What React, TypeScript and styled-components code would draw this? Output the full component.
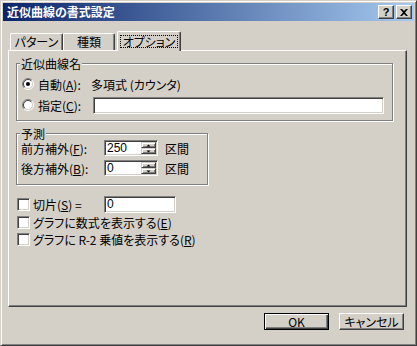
import styled, { createGlobalStyle } from 'styled-components';

const Global = createGlobalStyle`
  html, body {
    margin: 0;
    padding: 0;
    background: #d4d0c8;
  }
  body {
    font-family: "Noto Sans CJK JP", "Noto Sans", sans-serif;
    font-size: 12px;
    font-feature-settings: "palt";
    color: #000;
  }
  * {
    box-sizing: border-box;
  }
`;

const Window = styled.div`
  width: 417px;
  height: 346px;
  background: #d4d0c8;
  border: 1px solid;
  border-color: #d4d0c8 #404040 #404040 #d4d0c8;
  box-shadow: inset 1px 1px #fff, inset -1px -1px #808080;
  padding: 2px;
  display: flex;
  flex-direction: column;
`;

const TitleBar = styled.div`
  height: 18px;
  display: flex;
  align-items: center;
  padding: 0 2px;
  background: linear-gradient(to right, #0a246a, #a6caf0);
`;

const Title = styled.span`
  margin-left: 2px;
  color: #fff;
  font-weight: 700;
  font-size: 12px;
  line-height: 14px;
`;

const CaptionBtns = styled.div`
  margin-left: auto;
  display: flex;
  gap: 2px;
`;

const CaptionBtn = styled.div`
  width: 16px;
  height: 14px;
  display: flex;
  align-items: center;
  justify-content: center;
  background: #d4d0c8;
  border: 1px solid;
  border-color: #fff #404040 #404040 #fff;
  box-shadow: inset -1px -1px #808080;
  font-family: "Liberation Sans", sans-serif;
  font-weight: 700;
  font-size: 11px;
  line-height: 12px;
`;

const Body = styled.div`
  flex: 1;
  display: flex;
  flex-direction: column;
  padding: 10px 7px 0 5px;
`;

const TabRow = styled.div`
  height: 20px;
  display: flex;
  align-items: flex-end;
  padding-left: 2px;
  margin-bottom: -1px;
  position: relative;
  z-index: 1;
`;

const Tab = styled.div<{ $active?: boolean; $w: number; $ml?: number }>`
  width: ${(p) => p.$w}px;
  height: ${(p) => (p.$active ? 20 : 17)}px;
  margin-bottom: ${(p) => (p.$active ? 0 : 1)}px;
  margin-left: ${(p) => p.$ml ?? 0}px;
  display: flex;
  align-items: center;
  justify-content: center;
  padding-bottom: ${(p) => (p.$active ? 1 : 0)}px;
  background: #d4d0c8;
  border-top: 1px solid #fff;
  border-left: 1px solid #fff;
  border-right: 1px solid #404040;
  border-radius: 2px 2px 0 0;
  box-shadow: inset -1px 0 #808080;
  line-height: 14px;
`;

const Focus = styled.span`
  border: 1px dotted #000;
  padding: 0 2px;
  line-height: 11px;
`;

const Panel = styled.div`
  height: 257px;
  display: flex;
  flex-direction: column;
  align-items: flex-start;
  padding: 12px 0 0 7px;
  border: 1px solid;
  border-color: #fff #404040 #404040 #fff;
  box-shadow: inset -1px -1px #808080;
`;

const Group = styled.div<{ $w: number; $h: number; $mt?: number }>`
  position: relative;
  width: ${(p) => p.$w}px;
  height: ${(p) => p.$h}px;
  margin-top: ${(p) => p.$mt ?? 0}px;
  border: 1px solid #808080;
  box-shadow: inset 1px 1px #fff, 1px 1px #fff;
  display: flex;
  flex-direction: column;
`;

const GroupLabel = styled.span`
  position: absolute;
  top: -6px;
  left: 3px;
  padding: 0 1px;
  background: #d4d0c8;
  line-height: 12px;
`;

const RadioList = styled.div`
  display: flex;
  flex-direction: column;
  gap: 1px;
  padding: 10px 0 0 5px;
`;

const Row = styled.div<{ $h: number }>`
  height: ${(p) => p.$h}px;
  display: flex;
  align-items: center;
  line-height: 13px;
  white-space: nowrap;
`;

const Label = styled.span<{ $w: number }>`
  width: ${(p) => p.$w}px;
  flex: none;
`;

const U = styled.span`
  text-decoration: underline;
  text-underline-offset: 1px;
`;

const RadioBox = styled.svg`
  flex: none;
  margin-right: 4px;
`;

const Sunken = styled.div<{ $w: number; $h: number }>`
  width: ${(p) => p.$w}px;
  height: ${(p) => p.$h}px;
  flex: none;
  display: flex;
  background: #fff;
  border: 1px solid;
  border-color: #808080 #fff #fff #808080;
  box-shadow: inset 1px 1px #404040, inset -1px -1px #d4d0c8;
  padding: 1px 1px 1px 2px;
  font-family: "Liberation Sans", sans-serif;
  font-size: 12px;
  line-height: 13px;
`;

const FieldText = styled.span`
  flex: 1;
  align-self: center;
`;

const SpinBtns = styled.div`
  width: 15px;
  display: flex;
  flex-direction: column;
`;

const SpinBtn = styled.div`
  flex: 1;
  display: flex;
  align-items: center;
  justify-content: center;
  background: #d4d0c8;
  border: 1px solid;
  border-color: #d4d0c8 #404040 #404040 #d4d0c8;
  box-shadow: inset 1px 1px #fff, inset -1px -1px #808080;
`;

const SpinList = styled.div`
  display: flex;
  flex-direction: column;
  gap: 4px;
  padding: 6px 0 0 4px;
`;

const Unit = styled.span`
  margin-left: 7px;
`;

const CheckList = styled.div`
  display: flex;
  flex-direction: column;
  margin-top: 9px;
  padding-left: 1px;
`;

const CheckBox = styled.div`
  width: 13px;
  height: 13px;
  flex: none;
  margin-right: 3px;
  background: #fff;
  border: 1px solid;
  border-color: #808080 #fff #fff #808080;
  box-shadow: inset 1px 1px #404040, inset -1px -1px #d4d0c8;
`;

const ButtonRow = styled.div`
  display: flex;
  justify-content: flex-end;
  gap: 10px;
  margin-top: 6px;
  padding-right: 3px;
`;

const Button = styled.div<{ $default?: boolean }>`
  width: 65px;
  height: 17px;
  display: flex;
  align-items: center;
  justify-content: center;
  background: #d4d0c8;
  border: 1px solid;
  border-color: ${(p) => (p.$default ? '#000' : '#fff #404040 #404040 #fff')};
  box-shadow: ${(p) =>
    p.$default
      ? 'inset 1px 1px #fff, inset -1px -1px #404040, inset -2px -2px #808080'
      : 'inset -1px -1px #808080'};
  line-height: 14px;
`;

function Radio({ checked }: { checked?: boolean }) {
  return (
    <RadioBox width="12" height="12" viewBox="0 0 12 12">
      <circle cx="6" cy="6" r="4.5" fill="#fff" />
      <path d="M2.1 9.9 A5.5 5.5 0 0 1 9.9 2.1" fill="none" stroke="#808080" />
      <path d="M9.9 2.1 A5.5 5.5 0 0 1 2.1 9.9" fill="none" stroke="#fff" />
      <path d="M2.8 9.2 A4.5 4.5 0 0 1 9.2 2.8" fill="none" stroke="#404040" />
      <path d="M9.2 2.8 A4.5 4.5 0 0 1 2.8 9.2" fill="none" stroke="#d4d0c8" />
      {checked && <circle cx="6" cy="6" r="2" fill="#000" />}
    </RadioBox>
  );
}

function Arrow({ up }: { up?: boolean }) {
  return (
    <svg width="5" height="3" viewBox="0 0 5 3">
      <path d={up ? 'M2.5 0.5 L4.5 2.5 L0.5 2.5 Z' : 'M0.5 0.5 L4.5 0.5 L2.5 2.5 Z'} fill="#000" />
    </svg>
  );
}

function Spin({ value }: { value: string }) {
  return (
    <Sunken $w={54} $h={16}>
      <FieldText>{value}</FieldText>
      <SpinBtns>
        <SpinBtn>
          <Arrow up />
        </SpinBtn>
        <SpinBtn>
          <Arrow />
        </SpinBtn>
      </SpinBtns>
    </Sunken>
  );
}

export default function App() {
  return (
    <>
      <Global />
      <Window>
        <TitleBar>
          <Title>近似曲線の書式設定</Title>
          <CaptionBtns>
            <CaptionBtn>?</CaptionBtn>
            <CaptionBtn>
              <svg width="8" height="7" viewBox="0 0 8 7">
                <path d="M0 0 L2 0 L4 2 L6 0 L8 0 L5 3.5 L8 7 L6 7 L4 5 L2 7 L0 7 L3 3.5 Z" fill="#000" />
              </svg>
            </CaptionBtn>
          </CaptionBtns>
        </TitleBar>
        <Body>
          <TabRow>
            <Tab $w={53}>パターン</Tab>
            <Tab $w={52}>種類</Tab>
            <Tab $w={64} $ml={2} $active>
              <Focus>オプション</Focus>
            </Tab>
          </TabRow>
          <Panel>
            <Group $w={377} $h={58}>
              <GroupLabel>近似曲線名</GroupLabel>
              <RadioList>
                <Row $h={20}>
                  <Radio checked />
                  <Label $w={53}>
                    自動(<U>A</U>):
                  </Label>
                  <span>多項式 (カウンタ)</span>
                </Row>
                <Row $h={20}>
                  <Radio />
                  <Label $w={55}>
                    指定(<U>C</U>):
                  </Label>
                  <Sunken $w={291} $h={17} />
                </Row>
              </RadioList>
            </Group>
            <Group $w={192} $h={52} $mt={12}>
              <GroupLabel>予測</GroupLabel>
              <SpinList>
                <Row $h={16}>
                  <Label $w={83}>
                    前方補外(<U>F</U>):
                  </Label>
                  <Spin value="250" />
                  <Unit>区間</Unit>
                </Row>
                <Row $h={16}>
                  <Label $w={83}>
                    後方補外(<U>B</U>):
                  </Label>
                  <Spin value="0" />
                  <Unit>区間</Unit>
                </Row>
              </SpinList>
            </Group>
            <CheckList>
              <Row $h={20}>
                <CheckBox />
                <Label $w={71}>
                  切片(<U>S</U>) =
                </Label>
                <Sunken $w={72} $h={17}>
                  <FieldText>0</FieldText>
                </Sunken>
              </Row>
              <Row $h={17}>
                <CheckBox />
                <span>
                  グラフに数式を表示する(<U>E</U>)
                </span>
              </Row>
              <Row $h={17}>
                <CheckBox />
                <span>
                  グラフに R-2 乗値を表示する(<U>R</U>)
                </span>
              </Row>
            </CheckList>
          </Panel>
          <ButtonRow>
            <Button $default>OK</Button>
            <Button>キャンセル</Button>
          </ButtonRow>
        </Body>
      </Window>
    </>
  );
}
